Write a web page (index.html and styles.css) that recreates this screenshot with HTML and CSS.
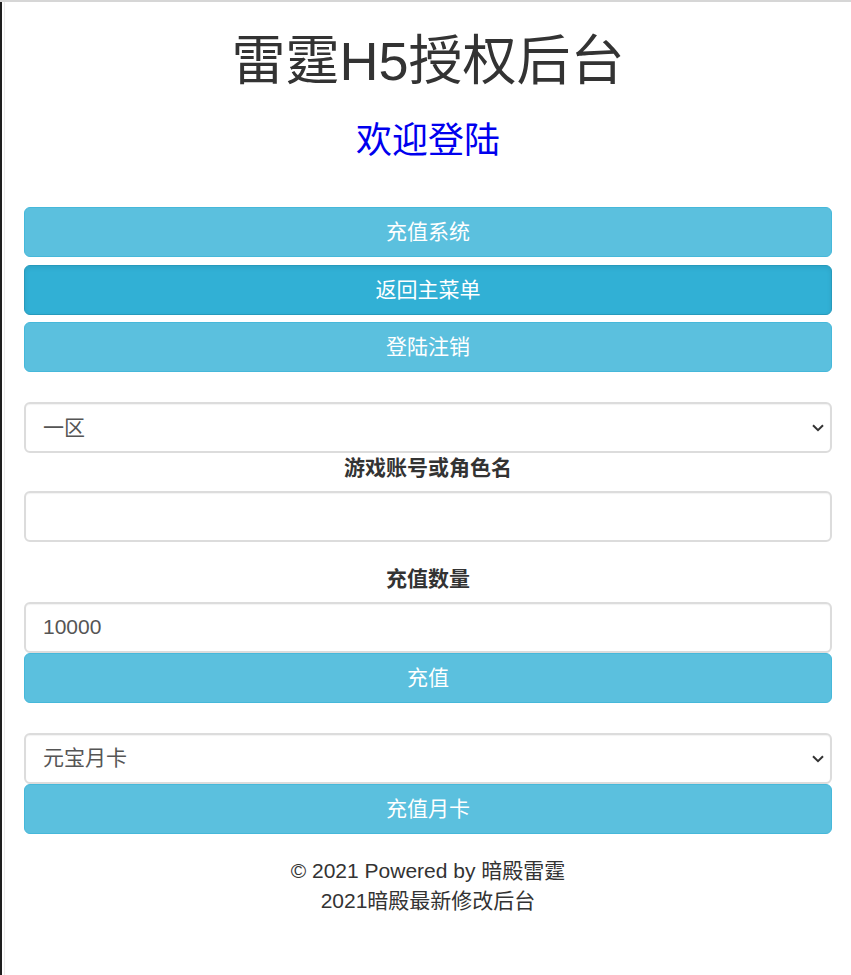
FILE: index.html
```html
<!DOCTYPE html>
<html lang="zh-CN">
<head>
<meta charset="utf-8">
<title>雷霆H5授权后台</title>
<link rel="stylesheet" href="styles.css">
</head>
<body>
<div class="page">
  <div class="container">
    <h1 class="title">雷霆H5授权后台</h1>
    <h3 class="welcome">欢迎登陆</h3>

    <div class="menu">
      <button class="btn">充值系统</button>
      <button class="btn btn-active">返回主菜单</button>
      <button class="btn">登陆注销</button>
    </div>

    <form class="form">
      <div class="select-wrap">
        <select class="control">
          <option>一区</option>
        </select>
        <svg class="chevron" width="12" height="8" viewBox="0 0 12 8"><path d="M1 1.2 L6 6.2 L11 1.2" fill="none" stroke="#333" stroke-width="2"/></svg>
      </div>
      <label class="label">游戏账号或角色名</label>
      <input class="control" type="text">

      <label class="label label-gap">充值数量</label>
      <input class="control" type="text" value="10000">
      <button class="btn" type="button">充值</button>

      <div class="select-wrap select-gap">
        <select class="control">
          <option>元宝月卡</option>
        </select>
        <svg class="chevron" width="12" height="8" viewBox="0 0 12 8"><path d="M1 1.2 L6 6.2 L11 1.2" fill="none" stroke="#333" stroke-width="2"/></svg>
      </div>
      <button class="btn" type="button">充值月卡</button>
    </form>

    <footer class="footer">
      <p>© 2021 Powered by 暗殿雷霆</p>
      <p>2021暗殿最新修改后台</p>
    </footer>
  </div>
</div>
</body>
</html>
```

FILE: styles.css
```css
html, body {
  margin: 0;
  padding: 0;
  background: #fff;
}

body {
  border-top: 2px solid #d6d6d6;
  font-family: "Liberation Sans", "Noto Sans CJK SC", sans-serif;
  font-size: 21px;
  line-height: 30px;
  color: #333;
}

.page {
  border-left: 2px solid #1e1e1e;
  box-shadow: inset 2px 0 0 #fff, inset 3px 0 0 #ececec;
  min-height: calc(100vh - 2px);
  box-sizing: border-box;
}

.container {
  padding: 0 19px 0 22px;
  display: flex;
  flex-direction: column;
}

.title {
  margin: 30px 0 0;
  font-size: 54px;
  line-height: 59.4px;
  font-weight: 400;
  text-align: center;
  color: #333;
}

.welcome {
  margin: 30px 0 0;
  font-size: 36px;
  line-height: 39.6px;
  font-weight: 400;
  text-align: center;
  color: #0000ee;
}

.menu {
  margin-top: 46px;
  display: flex;
  flex-direction: column;
  gap: 7.5px;
}

.btn {
  display: block;
  width: 100%;
  height: 50px;
  margin: 0;
  padding: 0 18px;
  box-sizing: border-box;
  border: 1px solid #46b8da;
  border-radius: 6px;
  background: #5bc0de;
  color: #fff;
  font-family: inherit;
  font-size: 21px;
  line-height: 30px;
  text-align: center;
  cursor: pointer;
}

.btn-active {
  background: #31b0d5;
  border-color: #269abc;
  box-shadow: inset 0 2px 4px rgba(0, 0, 0, 0.08);
}

.form {
  margin: 30px 0 0;
  display: flex;
  flex-direction: column;
}

.select-wrap {
  position: relative;
}

.select-gap {
  margin-top: 30px;
}

.control {
  display: block;
  width: 100%;
  height: 51px;
  margin: 0;
  padding: 0 17px;
  box-sizing: border-box;
  border: 2px solid #dcdcdc;
  border-radius: 6px;
  background: #fff;
  color: #555;
  font-family: inherit;
  font-size: 21px;
  line-height: 30px;
  box-shadow: inset 0 1px 1px rgba(0, 0, 0, 0.05);
  outline: none;
}

select.control {
  -webkit-appearance: none;
  appearance: none;
}

.chevron {
  position: absolute;
  right: 8px;
  top: 22px;
  pointer-events: none;
}

.label {
  display: block;
  margin: 0 0 7.5px;
  font-weight: bold;
  font-size: 21px;
  line-height: 30px;
  text-align: center;
  color: #333;
}

.label-gap {
  margin-top: 22px;
  margin-bottom: 8px;
}

.footer {
  margin-top: 22.5px;
  text-align: center;
}

.footer p {
  margin: 0;
  font-size: 21px;
  line-height: 30px;
  color: #333;
}
```
